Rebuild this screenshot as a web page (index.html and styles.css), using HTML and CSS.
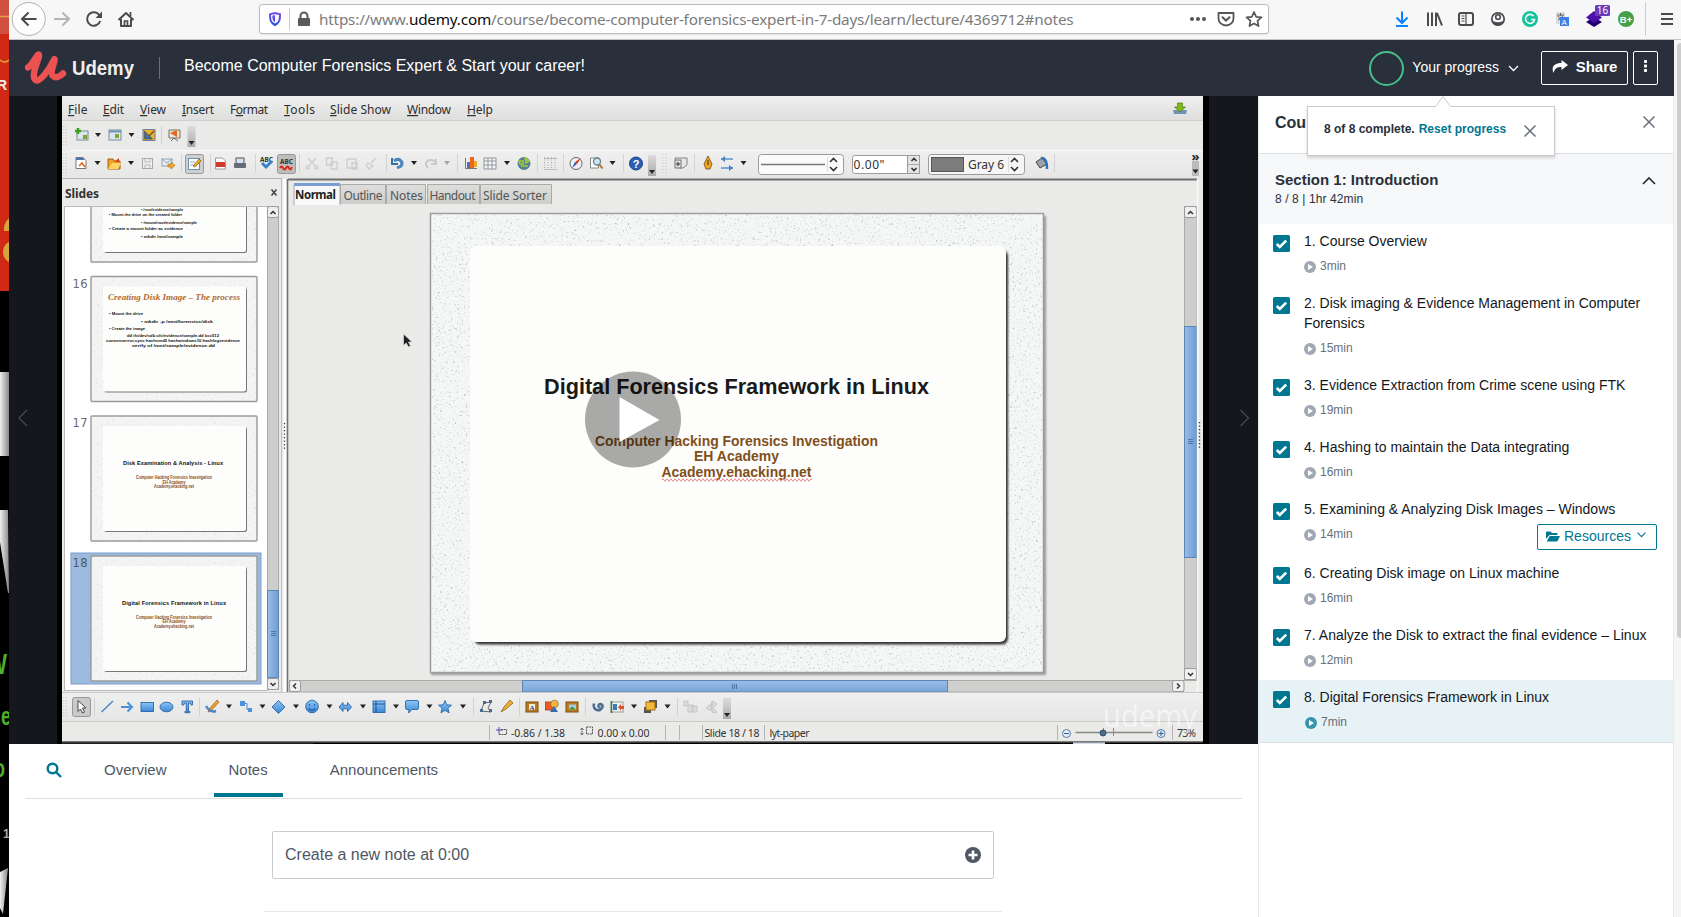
FILE: index.html
```
<!DOCTYPE html>
<html lang="en">
<head>
<meta charset="utf-8">
<title>Become Computer Forensics Expert &amp; Start your career! | Udemy</title>
<link rel="stylesheet" href="styles.css">
</head>
<body>
<svg class="defs" width="0" height="0">
  <defs>
    <symbol id="check" viewBox="0 0 17 17"><rect width="17" height="17" rx="1.5" fill="#007791"/><path d="M3.8 9l3 3L13.2 5.600" fill="none" stroke="#fff" stroke-width="2.600"/></symbol>
    <symbol id="play" viewBox="0 0 12 12"><circle cx="6" cy="6" r="6" fill="currentColor"/><path d="M4 3l5 3-5 3z" fill="#fff"/></symbol>
    <symbol id="close" viewBox="0 0 12 12"><path d="M.5.5l11 11M11.500.5l-11 11" fill="none" stroke="#686f7a" stroke-width="1.500"/></symbol>
  </defs>
</svg>
<div class="screen">
  <svg class="desktop" width="9" height="917" viewBox="0 0 9 917">
    <rect width="9" height="917" fill="#000"/>
    <rect width="9" height="291" fill="#d02a17"/>
    <rect width="9" height="34" fill="#d0503f"/>
    <path d="M0 16.500h9M0 60q4 4 9 0" stroke="#e0a040" stroke-width="1.500" fill="none"/>
    <text x="-3" y="90" class="strip-text" font-size="14" fill="#eee">R</text>
    <path d="M9 218q-6 6-5 13h5zM9 242c-8 4-8 16 0 20z" fill="#d9a23c"/>
    <linearGradient id="gs"><stop offset="0" stop-color="#eee"/><stop offset="1" stop-color="#888"/></linearGradient>
    <rect y="372" width="9" height="84" fill="url(#gs)"/>
    <path d="M0 510h8l1 83-1 0L0 542z" fill="url(#gs)"/>
    <text x="-13" y="674" class="strip-text" font-size="30" textLength="20" lengthAdjust="spacingAndGlyphs" fill="#4fae2a">W</text>
    <text x="1" y="725" class="strip-text" font-size="26" textLength="10" lengthAdjust="spacingAndGlyphs" fill="#4fae2a">e</text>
    <text x="-6" y="777" class="strip-text" font-size="26" textLength="11" lengthAdjust="spacingAndGlyphs" fill="#4fae2a">o</text>
    <text x="3" y="838" class="strip-text" font-size="12" fill="#aaa">1</text>
    <path d="M0 872l8-4-5 46-3-6z" fill="url(#gs)"/>
  </svg>
  <div class="window">
    <div class="toolbar">
      <svg class="nav-icons" width="140" height="39" viewBox="9 0 140 39" fill="none" stroke="#4a4a4f" stroke-width="2">
        <circle cx="28.700" cy="19" r="16.500" fill="#fdfdfd" stroke="#b1b1b3" stroke-width="1"/>
        <path d="M36.500 19H22M28.500 12.500L22 19l6.500 6.500"/>
        <path d="M54 19h15M62.500 12.500L69 19l-6.500 6.500" stroke="#b5b5b8"/>
        <path d="M99.500 15.500a6.700 6.700 0 1 0 .7 5.500"/><path d="M102 11.500v6.500h-6.500z" fill="#4a4a4f" stroke="none"/>
        <path d="M118.500 20l7.500-7 7.500 7M121 19v7h10v-7" stroke-linejoin="round"/><path d="M124.500 26v-5h3v5M130.500 12v4" stroke-width="1.700"/>
      </svg>
      <div class="urlbar">
        <svg width="60" height="28" viewBox="259 5 60 28">
          <linearGradient id="sh" x2="0" y2="1"><stop stop-color="#7a4de8"/><stop offset="1" stop-color="#2952d6"/></linearGradient>
          <path d="M274 13l5 1.300c0 5 0 8-5 10.700-5-2.700-5-5.700-5-10.700z" fill="none" stroke="url(#sh)" stroke-width="2"/>
          <path d="M274 15v7.500c-2.300-1.500-2.700-4-2.700-6.800z" fill="#5e50e0"/>
          <path d="M288.500 8v22" stroke="#ccc"/>
          <rect x="297" y="18" width="12" height="8" rx="1" fill="#5a5a5e"/><path d="M299.500 18v-2a3.500 3.500 0 0 1 7 0v2" fill="none" stroke="#5a5a5e" stroke-width="2"/>
        </svg>
        <span class="url"><span class="u1">https://www.</span><b>udemy.com</b><span class="u2">/course/become-computer-forensics-expert-in-7-days/learn/lecture/4369712#notes</span></span>
        <svg width="82" height="28" viewBox="1186 5 82 28" fill="none" stroke="#55555a">
          <g fill="#55555a" stroke="none"><circle cx="1192" cy="19" r="2"/><circle cx="1198" cy="19" r="2"/><circle cx="1204" cy="19" r="2"/></g>
          <path d="M1218.500 13h15v5.500a7.500 7 0 0 1-15 0z" stroke-width="1.800" stroke-linejoin="round"/><path d="M1222.500 17.300l3.500 3.300 3.500-3.300" stroke-width="2" stroke-linecap="round"/>
          <path d="M1254 12l2.200 4.800 5.200.6-3.900 3.500 1.100 5.200-4.600-2.700-4.600 2.700 1.100-5.200-3.900-3.500 5.200-.6z" stroke-width="1.700" stroke-linejoin="round"/>
        </svg>
      </div>
      <svg class="ext-icons" width="290" height="39" viewBox="1391 0 290 39" fill="none" stroke="#4a4a4f" stroke-width="2">
        <path d="M1402 11.500V22M1396.500 17.500l5.500 5.500 5.500-5.500M1396 26h12" stroke="#0a84ff"/>
        <path d="M1428 12.500V26M1432 12.500V26M1436 12.500V26M1437 13l5 12.500"/>
        <rect x="1459" y="13" width="14" height="12" rx="2"/><path d="M1466 13v12M1461.500 16h3M1461.500 18.500h3M1461.500 21h3" stroke-width="1.200"/>
        <circle cx="1498" cy="19" r="6.200" stroke-width="1.700"/><circle cx="1498" cy="17" r="2.300" stroke-width="1.600"/><path d="M1493 21q5 2.500 10 0l-1 3.500-4 1.500-4-1.500z" fill="#4a4a4f" stroke="none"/>
        <circle cx="1530" cy="19" r="8" fill="#15c39a" stroke="none"/><path d="M1533.500 16a4.500 4.500 0 1 0 1 3.500h-3.500" stroke="#fff" stroke-width="1.600"/>
        <rect x="1556" y="12" width="9" height="12" fill="#ddd" stroke="none"/><path d="M1557 15h7M1560.500 13v3M1558 20q4-1 5-5M1558 16q2 4 4 4" stroke="#666" stroke-width="1"/><rect x="1560" y="17" width="9" height="9" fill="#3b7de9" stroke="none"/><text x="1561.500" y="25" font-size="8" class="sans" fill="#fff" stroke="none">A</text>
        <path d="M1594 17l8 5-8 5-8-5z" fill="#22006e" stroke="none"/><path d="M1594 11l8 6.500-8 5.500-8-5.500z" fill="#4b10a8" stroke="none"/>
        <rect x="1595" y="5" width="15" height="11" rx="1.500" fill="#6a3ab8" stroke="none"/><text x="1602.500" y="14.300" font-size="10" text-anchor="middle" class="ui" fill="#fff" stroke="none">16</text>
        <circle cx="1626" cy="19" r="8" fill="#43a047" stroke="none"/><text x="1626" y="22.500" font-size="9.500" text-anchor="middle" class="sans bold" fill="#fff" stroke="none">B+</text>
        <path d="M1645.500 2.500v33" stroke="#ccc" stroke-width="1"/>
        <path d="M1661 14h12M1661 19h12M1661 24h12"/>
      </svg>
    </div>
    <div class="page">
      <header class="topbar">
        <svg class="logo" width="128" height="56" viewBox="25 40 128 56">
          <path d="M28 67.500C32 65 36 56 38.500 54.500C41.500 55 31 73 34.500 79C39 85.500 50 68 54.500 59C56 61 49.500 71 52.500 75.500C55.500 79 60 76.500 63 73.500" fill="none" stroke="#ec5252" stroke-width="6.400" stroke-linecap="round" stroke-linejoin="round"/>
          <text x="72" y="75" class="sans bold" font-size="19.500" textLength="62" lengthAdjust="spacingAndGlyphs" fill="#f0efec">Udemy</text>
        </svg>
        <div class="course-title">Become Computer Forensics Expert &amp; Start your career!</div>
        <div class="progress">
          <span class="ring"></span><span class="progress-label">Your progress</span>
          <svg width="11" height="7" viewBox="0 0 11 7"><path d="M1 1l4.500 4.500L10 1" fill="none" stroke="#fff" stroke-width="1.300"/></svg>
        </div>
        <button class="ghost share"><svg width="16" height="13" viewBox="0 0 16 13"><path d="M9.500 0L16 5 9.500 10V7C5 7 3 8 1.500 13 -1 7 2 3 9.500 3z" fill="#fff"/></svg>Share</button>
        <button class="ghost more"><svg width="3" height="12" viewBox="0 0 3 12" fill="#fff"><rect width="3" height="3" rx=".7"/><rect y="4.500" width="3" height="3" rx=".7"/><rect y="9" width="3" height="3" rx=".7"/></svg></button>
      </header>
      <div class="columns">
        <main class="main">
          <svg class="video" width="1249" height="648" viewBox="9 96 1249 648">
            <defs>
              <linearGradient id="menu" x2="0" y2="1"><stop stop-color="#efefef"/><stop offset="1" stop-color="#dfdfde"/></linearGradient>
              <linearGradient id="bar" x2="0" y2="1"><stop stop-color="#efefef"/><stop offset="1" stop-color="#e6e6e5"/></linearGradient>
              <linearGradient id="blueV"><stop stop-color="#9bbde6"/><stop offset="1" stop-color="#6c9cd2"/></linearGradient>
              <linearGradient id="blueH" x2="0" y2="1"><stop stop-color="#9bbde6"/><stop offset="1" stop-color="#78a5d8"/></linearGradient>
              <linearGradient id="over" x2="0" y2="1"><stop stop-color="#dcdcdc"/><stop offset="1" stop-color="#aaa"/></linearGradient>
              <linearGradient id="ib" x2="0" y2="1"><stop stop-color="#8cc4f5"/><stop offset="1" stop-color="#3a86d6"/></linearGradient>
              <filter id="noise" x="0" y="0" width="1" height="1"><feTurbulence type="fractalNoise" baseFrequency=".47" numOctaves="3" seed="7"/><feColorMatrix values="0 0 0 0 .5 0 0 0 0 .53 0 0 0 0 .54 3.600 0 0 0 -2.150"/><feComposite in2="SourceGraphic" operator="in"/></filter>
              <filter id="sh1" x="-5%" y="-5%" width="110%" height="112%"><feGaussianBlur stdDeviation="1.300"/></filter>
              <path id="c" d="M-3-2h6l-3 4z" fill="#222"/>
              <path id="d" d="M.5-9v18" stroke="#d2d2d2"/>
              <path id="g" d="M-1-10v20M2-10v20" stroke="#c4c4c4" stroke-dasharray="1 2"/>
              <g id="o"><rect x="-4" y="-10" width="8" height="21" fill="url(#over)"/><use href="#c" y="7"/></g>
              <g id="thumb"><rect width="166" height="125" rx="1" fill="#f3f4f3" stroke="#9a9a9a" stroke-width="1.400"/><rect x="1" y="1" width="164" height="123" filter="url(#noise)" opacity=".4"/><rect x="13.500" y="11.500" width="142.500" height="104.500" rx="2" fill="#777"/><rect x="12" y="10" width="143" height="105" rx="2" fill="#fdfdfb"/></g>
              <g id="sub" class="sans bold" font-size="4.600" fill="#8a4c17" text-anchor="middle"><text x="83" y="62.500" textLength="76" lengthAdjust="spacingAndGlyphs">Computer Hacking Forensics Investigation</text><text x="83" y="67" textLength="23" lengthAdjust="spacingAndGlyphs">EH Academy</text><text x="83" y="71.500" textLength="40" lengthAdjust="spacingAndGlyphs">Academy.ehacking.net</text></g>
            </defs>
            <rect x="9" y="96" width="1249" height="648" fill="#14171c"/>
            <rect x="57" y="96" width="1152" height="648" fill="#000"/>
            <rect x="62" y="96" width="1141" height="646" fill="#eaeae9"/>
            <rect x="62" y="741" width="1141" height="1.500" fill="#777"/>
            <path d="M313 743.200H62" stroke="#333"/><path d="M1073 743.200h32" stroke="#dfe5f5" stroke-width="1.500"/>
            <rect x="62" y="96" width="1141" height="24" fill="url(#menu)"/><path d="M62 120.500h1141" stroke="#cfcfcf"/>
            <g class="ui" font-size="12" fill="#2e2e2e">
              <text x="68" y="114" textLength="19.500"><tspan class="key">F</tspan>ile</text>
              <text x="103" y="114" textLength="21"><tspan class="key">E</tspan>dit</text>
              <text x="140" y="114" textLength="26"><tspan class="key">V</tspan>iew</text>
              <text x="182" y="114" textLength="32"><tspan class="key">I</tspan>nsert</text>
              <text x="230" y="114" textLength="38">F<tspan class="key">o</tspan>rmat</text>
              <text x="284" y="114" textLength="31"><tspan class="key">T</tspan>ools</text>
              <text x="330" y="114" textLength="61"><tspan class="key">S</tspan>lide Show</text>
              <text x="407" y="114" textLength="44"><tspan class="key">W</tspan>indow</text>
              <text x="467" y="114" textLength="26"><tspan class="key">H</tspan>elp</text>
            </g>
            <path d="M1173 110h14l-1 4h-12z" fill="#6d93b5"/><path d="M1177.500 103h5v4h3l-5.500 5-5.500-5h3z" fill="#83b81a" stroke="#4d7a10" stroke-width=".7"/>
            <rect x="62" y="151" width="1141" height="28" fill="url(#bar)"/><path d="M70 150.500h1133" stroke="#fafafa"/>
            <!-- presentation toolbar -->
            <use href="#g" x="64" y="136"/>
            <rect x="77" y="131" width="11" height="9" fill="#dbe6ee" stroke="#7f8c96"/><path d="M78 128v6M75 131h6" stroke="#38a11d" stroke-width="2.500"/><rect x="83" y="135" width="4" height="4" fill="#78a835"/>
            <use href="#c" x="98" y="135"/>
            <rect x="109" y="130" width="12" height="10" fill="#dbe6ee" stroke="#7f8c96"/><path d="M109 131.500h12" stroke="#6a94bd" stroke-width="2"/><rect x="115" y="134" width="4" height="4" fill="#78a835"/>
            <use href="#c" x="131.500" y="135"/>
            <rect x="143" y="129.500" width="12" height="11" fill="#edb12d" stroke="#6b7f96"/><path d="M144.500 131v8h8z" fill="#456fae" stroke="#345" stroke-width=".6"/><path d="M154 131l-5 5" stroke="#7a4a10" stroke-width="1.300"/>
            <use href="#d" x="161" y="135"/>
            <path d="M169 130h11v8h-11z" fill="#eae4da" stroke="#7e6c5a"/><path d="M170 133l7-3v7z" fill="#e0681f"/><path d="M171 141l3-3 4 3" fill="none" stroke="#666"/>
            <use href="#o" x="191.500" y="136"/>
            <!-- standard toolbar -->
            <use href="#g" x="64" y="164"/>
            <path d="M76 157.500h7l3 3v8H76z" fill="#fff" stroke="#777"/><path d="M76 158h8v2h-8z" fill="#4a76ad"/><path d="M79 166l3-3 3 4" stroke="#e0681f" stroke-width="1.600" fill="none"/>
            <use href="#c" x="97.500" y="163"/>
            <path d="M108 159h5l1 2h6v8h-12z" fill="#f0a328" stroke="#a3650d"/><path d="M112 163h9l-3 6h-10z" fill="#ffd465"/><path d="M114 162l5-4v4" fill="#d9481c"/>
            <use href="#c" x="131" y="163"/>
            <rect x="142.500" y="158.500" width="10" height="10" fill="#eee" stroke="#aaa"/><path d="M145 159v3h5v-3M145 168v-3h5v3" fill="none" stroke="#bbb"/>
            <rect x="162" y="159" width="10" height="7" fill="#e6eef4" stroke="#8ba1b4"/><path d="M162 159l5 4 5-4" fill="none" stroke="#8ba1b4"/><path d="M168 164h3v-2l4 3.500-4 3.500v-2h-3z" fill="#eea62c" stroke="#ae6d10" stroke-width=".6"/>
            <use href="#d" x="181" y="163"/>
            <rect x="185.500" y="154.500" width="18" height="19" rx="2" fill="#cfcfcf" stroke="#999"/><rect x="188.500" y="158.500" width="11" height="11" fill="#fff" stroke="#6c8fb0"/><path d="M190 162h5M190 165h4" stroke="#9ac"/><path d="M193 166l6-7 2 2-6 6z" fill="#e9ad20" stroke="#8a5910" stroke-width=".7"/>
            <use href="#d" x="210" y="163"/>
            <path d="M215.500 158h7l3 3v8h-10z" fill="#fff" stroke="#999"/><rect x="216" y="162" width="9" height="5" fill="#d23a2a"/>
            <rect x="236" y="158" width="8" height="6" fill="#cfe1f2" stroke="#555"/><rect x="234" y="163" width="12" height="5" rx="1" fill="#666c76"/>
            <use href="#d" x="255" y="163"/>
            <text x="260" y="162" class="ui bold" font-size="6.500" textLength="13" fill="#333">ABC</text><path d="M262 163l4 4 6-6" stroke="#3a7fcc" stroke-width="3" fill="none"/>
            <rect x="277.500" y="154.500" width="18" height="19" rx="2" fill="#bdbdbb" stroke="#999"/><text x="280" y="164" class="ui bold" font-size="6.500" textLength="13" fill="#333">ABC</text><path d="M280 168q1.500-3 3 0t3 0 3 0 3-1" stroke="#dc2716" stroke-width="2" fill="none"/>
            <use href="#d" x="299" y="163"/>
            <g stroke="#cdcdcd" fill="none" stroke-width="1.300"><path d="M308 158l8 9M316 158l-8 9"/><circle cx="307.500" cy="167.500" r="1.500"/><circle cx="316.500" cy="167.500" r="1.500"/><path d="M326.500 158h6v7h-6zM331 162h6v7h-6zM347 159h9v9h-9zM352 163h5v6h-5zM376 158l-5 5M368 163l5 3-4 3-3-4z"/></g>
            <use href="#d" x="386" y="163"/>
            <path d="M392 158v6h6" fill="none" stroke="#3c6fa3" stroke-width="2"/><path d="M394 161c5-4 10 1 7 5l-4 2" fill="none" stroke="#4c86c0" stroke-width="3"/>
            <use href="#c" x="414" y="163"/><path d="M436 159v5h-5M435 162c-4-4-10-1-9 3l2 3" fill="none" stroke="#c9c9c9" stroke-width="2"/><use href="#c" x="447" y="163" opacity=".35"/>
            <use href="#d" x="457" y="163"/>
            <path d="M465.500 158v10.500H477" fill="none" stroke="#777"/><path d="M467 162h3v6h-3z" fill="#3f77b9"/><path d="M470 157h4v11h-4z" fill="#f0651a"/><path d="M474 161h3v6h-3z" fill="#f2a72c"/>
            <path d="M484 158h12v11h-12zM484 161h12M484 165h12M488 158v11M492 158v11" fill="#f4f6f7" stroke="#8e989e"/>
            <use href="#c" x="507" y="163"/>
            <circle cx="524" cy="163.500" r="6.500" fill="#558192"/><path d="M519 161h4v3h-3zM525 158l4 3-3 2zM521 166h7" stroke="#a3c93c" stroke-width="1.600" fill="none"/>
            <use href="#d" x="537" y="163"/>
            <path d="M544.500 157v13M548 157v13M551.500 157v13M555 157v13" stroke="#aaa" stroke-dasharray="1 1.500"/><path d="M544 158.500h13M544 169.500h13" stroke="#bbb"/>
            <use href="#d" x="563" y="163"/>
            <circle cx="576" cy="163.500" r="6" fill="#eff1f5" stroke="#666"/><path d="M572 168l3-6 2 2z" fill="#2b63b3"/><path d="M581 158l-6 4 2 2z" fill="#d6331f"/>
            <path d="M590.500 158h8v10h-8z" fill="#fff" stroke="#888"/><circle cx="597" cy="161.500" r="3.500" fill="#cfe3f2" stroke="#66808f" stroke-width="1.300"/><path d="M599.500 164.500l3 4" stroke="#b1751a" stroke-width="2"/>
            <use href="#c" x="612.500" y="163"/><use href="#d" x="623" y="163"/>
            <circle cx="636" cy="163.500" r="6.500" fill="#2b5fb5" stroke="#173e80"/><text x="636" y="168" text-anchor="middle" class="sans bold" font-size="11" fill="#fff">?</text>
            <use href="#o" x="652" y="165"/><use href="#g" x="664" y="164"/>
            <path d="M675 158h12v7l-4 3h-4z" fill="#e6e8e8" stroke="#7c8587"/><rect x="675" y="160" width="6" height="8" fill="#ddd" stroke="#777"/><path d="M678 162v4M676 164h4" stroke="#333"/>
            <use href="#d" x="694" y="163"/>
            <path d="M708 156l4 8-2 5h-4l-2-5z" fill="#f0a51d" stroke="#6d4c18" stroke-width=".8"/><path d="M708 160v5" stroke="#333"/>
            <path d="M721 159h12M721 168h12" stroke="#5d93cd" stroke-width="1.500"/><path d="M725 156l-4 3 4 3zM729 165l4 3-4 3z" fill="#4681c4"/>
            <use href="#c" x="743.500" y="163"/>
            <rect x="758.500" y="154.500" width="85" height="20" rx="3" fill="#fbfbfb" stroke="#9b9b9b"/><path d="M761 164.500h64" stroke="#777" stroke-width="1.500"/>
            <rect x="852.500" y="155.500" width="67" height="18" rx="2" fill="#fff" stroke="#9b9b9b"/><rect x="907.500" y="155.500" width="12" height="18" fill="#e4e4e4" stroke="#9b9b9b"/>
            <rect x="928.500" y="154.500" width="96" height="20" rx="3" fill="#f6f6f6" stroke="#9b9b9b"/><rect x="931.500" y="157.500" width="32" height="14" fill="#7c7c7c" stroke="#555"/><path d="M827.500 157v15M1008.500 157v15" stroke="#ddd"/>
            <path d="M830 162l3.500-3.500 3.500 3.500M830 167l3.500 3.500 3.500-3.500M1011 162l3.500-3.500 3.500 3.500M1011 167l3.500 3.500 3.500-3.500M911.500 161l2.500-2.500 2.500 2.500M911.500 168l2.500 2.500 2.500-2.500" fill="none" stroke="#333" stroke-width="1.600"/><path d="M908 164.500h11" stroke="#aaa"/>
            <text x="853.500" y="169" class="ui" font-size="12" textLength="31" fill="#333">0.00"</text><text x="968" y="169" class="ui" font-size="12" textLength="36" fill="#333">Gray 6</text>
            <path d="M1036 162l6-4 5 6-7 4z" fill="#9ba2a8" stroke="#444"/><path d="M1041 158q6-1 6 11" fill="none" stroke="#2d6eb8" stroke-width="2.500"/><use href="#d" x="1054" y="163"/>
            <rect x="1192" y="161" width="7" height="15" fill="#bbb"/><use href="#c" x="1195.500" y="171.500"/><text x="1191.500" y="161" class="ui bold" font-size="13" fill="#222">»</text>
            <!-- slides pane -->
            <path d="M62 178.500h220" stroke="#b4b4b4"/><path d="M288 179.500h909" stroke="#6e6e6e" stroke-width="2"/>
            <text x="65" y="198" class="ui bold" font-size="12" textLength="34" fill="#333">Slides</text>
            <path d="M271.500 189.500l5 6M276.500 189.500l-5 6" stroke="#444" stroke-width="1.500"/>
            <rect x="64.500" y="206.500" width="203" height="484" fill="#fefefe" stroke="#bbb"/>
            <svg x="65" y="207" width="202" height="483" viewBox="65 207 202 483">
              <use href="#thumb" x="91" y="137"/>
              <g class="sans bold" font-size="4.200" fill="#111"><text x="141" y="210.500" textLength="42" lengthAdjust="spacingAndGlyphs">• /root/evidence/sample</text><text x="109" y="216" textLength="73" lengthAdjust="spacingAndGlyphs">• Mount the drive on the created folder</text><text x="141" y="224" textLength="56" lengthAdjust="spacingAndGlyphs">• /mount/root/evidence/sample</text><text x="109" y="230" textLength="74" lengthAdjust="spacingAndGlyphs">• Create a mount folder as evidence</text><text x="141" y="238" textLength="42" lengthAdjust="spacingAndGlyphs">• mkdir /mnt/sample</text></g>
              <use href="#thumb" x="91" y="276.500"/>
              <text x="108" y="300" class="serif" font-size="8.400" textLength="132" lengthAdjust="spacingAndGlyphs" fill="#b06a35">Creating Disk Image – The process</text>
              <g class="sans bold" font-size="4.200" fill="#111"><text x="109" y="314.500" textLength="34" lengthAdjust="spacingAndGlyphs">• Mount the drive</text><text x="141" y="322.500" textLength="72" lengthAdjust="spacingAndGlyphs">• mkdir -p /mnt/forensics/disk</text><text x="109" y="329.500" textLength="36" lengthAdjust="spacingAndGlyphs">• Create the image</text><text x="127" y="337" font-size="3.800" textLength="92" lengthAdjust="spacingAndGlyphs">dd if=/dev/sdb of=/evidence/sample.dd bs=512</text><text x="106" y="341.500" font-size="3.800" textLength="134" lengthAdjust="spacingAndGlyphs">conv=noerror,sync hash=md5 hashwindow=10 hashlog=evidence</text><text x="132" y="346.500" font-size="3.800" textLength="83" lengthAdjust="spacingAndGlyphs">verify of /mnt/sample/evidence.dd</text></g>
              <use href="#thumb" x="91" y="416"/><use href="#sub" x="91" y="416.500"/>
              <text x="123" y="465" class="sans bold" font-size="5.600" textLength="100" fill="#111">Disk Examination &amp; Analysis - Linux</text>
              <rect x="71" y="553" width="190" height="131" fill="#9cb9de" stroke="#7d9fca"/>
              <use href="#thumb" x="91" y="556"/><use href="#sub" x="91" y="556"/>
              <text x="122" y="605" class="sans bold" font-size="5.600" textLength="104" fill="#111">Digital Forensics Framework in Linux</text>
              <g class="wide" font-size="11.500" fill="#6a6a6a"><text x="72.500" y="287.500" textLength="15">16</text><text x="72.500" y="427" textLength="15">17</text><text x="72.500" y="567" textLength="15" fill="#4d5968">18</text></g>
            </svg>
            <rect x="267.500" y="206.500" width="11" height="483" fill="#cdcdcc" stroke="#aaa"/><rect x="267.500" y="206.500" width="11" height="11" rx="2" fill="#eee" stroke="#999"/><rect x="267.500" y="678.500" width="11" height="11" rx="2" fill="#eee" stroke="#999"/>
            <rect x="267.500" y="590.500" width="11" height="87" fill="url(#blueV)" stroke="#5d87b7"/><path d="M271 631.500h5M271 633.500h5M271 635.500h5" stroke="#4d77a7"/>
            <path d="M270.500 214l2.500-2.500 2.500 2.500M270.500 683l2.500 2.500 2.500-2.500" stroke="#333" stroke-width="1.500" fill="none"/>
            <path d="M281.500 179v513" stroke="#c0c0c0"/><path d="M285 179v513" stroke="#fff" stroke-width="3"/><path d="M287.500 179v513" stroke="#727272" stroke-width="1.600"/><path d="M284.500 423v26" stroke="#333" stroke-width="1.300" stroke-dasharray="1.300 2.200"/>
            <!-- editing area -->
            <linearGradient id="tab" x2="0" y2="1"><stop stop-color="#dededd"/><stop offset="1" stop-color="#cdcdcc"/></linearGradient>
            <path d="M340.500 204v-19.500h45V204M386.500 204v-19.500h39V204M427.500 204v-19.500h52V204M480.500 204v-19.500h71V204" fill="url(#tab)" stroke="#aaa"/>
            <rect x="294" y="183" width="46" height="22" rx="2" fill="#f8f8f8"/><path d="M294 205v-20M340 185v20" stroke="#aaa"/><path d="M294 184.500h46" stroke="#7b9fd3" stroke-width="3"/>
            <g class="ui" font-size="12" fill="#555"><text x="295" y="199" class="bold" font-size="11.500" textLength="41" fill="#222">Normal</text><text x="343.500" y="199.500" textLength="39">Outline</text><text x="390" y="199.500" textLength="33">Notes</text><text x="429.500" y="199.500" textLength="46">Handout</text><text x="483" y="199.500" textLength="64">Slide Sorter</text></g>
            <rect x="431" y="216" width="615" height="459" fill="#999" filter="url(#sh1)"/>
            <rect x="430.500" y="213.500" width="613" height="459" fill="#f5f7f6" stroke="#9a9e9e" stroke-width="1.500"/><rect x="431" y="214" width="612" height="458" filter="url(#noise)"/>
            <rect x="474" y="250" width="534" height="394.500" rx="6" fill="#333" filter="url(#sh1)"/>
            <rect x="470" y="246" width="536" height="396" rx="6" fill="#fdfdfb"/>
            <text x="544" y="394" class="sans bold" font-size="22.500" textLength="385" lengthAdjust="spacingAndGlyphs" fill="#1a1a1a">Digital Forensics Framework in Linux</text>
            <g class="sans bold" font-size="14" fill="#804f1b"><text x="595" y="446" textLength="283" lengthAdjust="spacingAndGlyphs">Computer Hacking Forensics Investigation</text><text x="694" y="461" textLength="85" lengthAdjust="spacingAndGlyphs">EH Academy</text><text x="661.500" y="476.500" textLength="150" lengthAdjust="spacingAndGlyphs">Academy.ehacking.net</text></g>
            <path d="M662 480q1-2.500 2 0t2 0 2 0 2 0 2 0 2 0 2 0 2 0 2 0 2 0 2 0 2 0 2 0 2 0 2 0 2 0 2 0 2 0 2 0 2 0 2 0 2 0 2 0 2 0 2 0 2 0 2 0 2 0 2 0 2 0 2 0 2 0 2 0 2 0 2 0 2 0 2 0 2 0 2 0 2 0 2 0 2 0 2 0 2 0 2 0 2 0 2 0 2 0 2 0 2 0 2 0 2 0 2 0 2 0 2 0 2 0 2 0 2 0 2 0 2 0 2 0 2 0 2 0 2 0 2 0 2 0 2 0 2 0 2 0 2 0 2 0 2 0 2 0 2 0 2 0" fill="none" stroke="#e88" stroke-width="1"/>
            <path d="M403.500 334v11.500l2.700-2.500 2.300 4 2-1-2-4h3.500z" fill="#222" stroke="#ddd" stroke-width=".7"/>
            <rect x="1184.500" y="206.500" width="12" height="474" fill="#cdcdcc" stroke="#aaa"/><rect x="1184.500" y="206.500" width="12" height="11" rx="2" fill="#f0f0f0" stroke="#999"/><rect x="1184.500" y="668.500" width="12" height="11" rx="2" fill="#f0f0f0" stroke="#999"/><rect x="1184.500" y="326.500" width="12" height="231" fill="url(#blueV)" stroke="#5d87b7"/><path d="M1188 439.500h5M1188 441.500h5M1188 443.500h5" stroke="#4d77a7"/>
            <path d="M1188 214l2.500-2.500 2.500 2.500M1188 673l2.500 2.500 2.500-2.500" stroke="#333" stroke-width="1.500" fill="none"/>
            <path d="M1197.500 179v513" stroke="#fafafa" stroke-width="1.500"/><path d="M1199.500 422v27" stroke="#333" stroke-width="1.300" stroke-dasharray="1.300 2.200"/>
            <rect x="289.500" y="680.500" width="894" height="11.500" fill="#cfd0cd" stroke="#aaa"/><rect x="289.500" y="680.500" width="11" height="11" rx="2" fill="#f0f0f0" stroke="#999"/><rect x="1172.500" y="680.500" width="11.500" height="11" rx="2" fill="#f0f0f0" stroke="#999"/><rect x="522.500" y="680.500" width="425" height="11.500" fill="url(#blueH)" stroke="#5d87b7"/><path d="M732.500 684v5M734.500 684v5M736.500 684v5" stroke="#4d77a7"/>
            <path d="M296 683.500l-2.500 2.500 2.500 2.500M1177 683.500l2.500 2.500-2.500 2.500" stroke="#333" stroke-width="1.500" fill="none"/>
            <!-- drawing toolbar -->
            <rect x="62" y="693" width="1141" height="28" fill="url(#bar)"/><path d="M62 692.500h1141M62 721.500h1141" stroke="#c9c9c8"/><use href="#g" x="64" y="707"/>
            <rect x="72.500" y="697.500" width="18" height="19" rx="2" fill="#c9c9c8" stroke="#999"/><path d="M78 700.500v11l2.500-2.500 2 4 2-1-2-4h3.500z" fill="#fff" stroke="#444"/>
            <use href="#d" x="94" y="707"/>
            <path d="M101.500 712l11.500-11" stroke="#4a86c5" stroke-width="1.500"/><path d="M121 707h9" stroke="#4a8fd8" stroke-width="2"/><path d="M127.500 702.500l4.500 4.500-4.500 4.500" fill="none" stroke="#4a8fd8" stroke-width="2"/>
            <g fill="url(#ib)" stroke="#2b66a8" stroke-width=".9"><rect x="141" y="702.500" width="12.500" height="9"/><ellipse cx="166.500" cy="707" rx="6.500" ry="4.800"/><path d="M182 701h10.500v4h-1.500l-.5-2h-2v8.500h1.400v1.200h-5v-1.200h1.400V703h-2l-.5 2h-1.800z"/><path d="M278.500 700.500l6.500 6.500-6.500 6.500-6.500-6.500zM339 707l4-4.500v2.700h4.500v-2.700l4 4.500-4 4.500v-2.700H343v2.700zM405.500 702q0-1.500 1.500-1.500h10q1.500 0 1.500 1.500v6q0 1.500-1.500 1.500h-5l-3.500 3.500.5-3.500h-2q-1.500 0-1.500-1.500zM445 700.500l1.800 4.300 4.700.4-3.600 3 1.200 4.600-4.100-2.500-4.100 2.500 1.200-4.600-3.600-3 4.700-.4z"/><circle cx="312" cy="706.500" r="6.300"/><rect x="373" y="701" width="12" height="11.500"/></g>
            <path d="M309.500 704v1.500M314.500 704v1.500M308.500 708.500q3.500 3.500 7 0M376 701v11M373 704h12" stroke="#215793" stroke-width="1.100" fill="none"/>
            <path d="M217 700l-8 9-1 3 3-1 8-9z" fill="#eba02b" stroke="#8b541b" stroke-width=".6"/><path d="M206 706q4 7 10 5" stroke="#4687cc" stroke-width="2.500" fill="none"/>
            <path d="M242 703.500h5v6h4" stroke="#4687cc" fill="none"/><path d="M240 701h5v5h-5zM248 708h4v4h-4z" fill="#4b92db"/>
            <use href="#d" x="199" y="707"/><use href="#c" x="229" y="706.500"/><use href="#c" x="262.500" y="706.500"/><use href="#c" x="296" y="706.500"/><use href="#c" x="329.500" y="706.500"/><use href="#c" x="363" y="706.500"/><use href="#c" x="396" y="706.500"/><use href="#c" x="429.500" y="706.500"/><use href="#c" x="463" y="706.500"/><use href="#d" x="473" y="707"/>
            <path d="M481 711l3-8 7-1-3 6 3 4z" fill="none" stroke="#666"/><path d="M480 709h3v3h-3zM483 701h3v3h-3zM489 700h3v3h-3zM489 709h3v3h-3z" fill="#456990"/>
            <path d="M501 712l3-5 6-7 3 3-7 6z" fill="#edaf38" stroke="#8f611c" stroke-width=".8"/><use href="#d" x="519" y="707"/>
            <rect x="526" y="702" width="12" height="10" fill="#b97925" stroke="#80500d"/><rect x="529" y="704" width="6" height="6" fill="#f6ead1"/><text x="532" y="710" text-anchor="middle" class="serif-b" font-size="7" fill="#224c82">A</text>
            <rect x="545.500" y="702" width="8" height="8" fill="#ee5a23" stroke="#8e3312" stroke-width=".7"/><circle cx="554.500" cy="704" r="3.800" fill="#f2b842" stroke="#93701a" stroke-width=".7"/><path d="M554 706l4 6h-8z" fill="#3a6cab"/>
            <rect x="566" y="702" width="12" height="10" fill="#b97925" stroke="#80500d"/><rect x="569" y="704.500" width="7" height="5" fill="#9dd0e8"/><path d="M569 709.500l3-3 4 3z" fill="#4d8c25"/><use href="#d" x="585" y="707"/>
            <path d="M594 703.500c-2 7 7 9 8.500 3.500c.5-3-3-4-4-1.500c-.5 1.500 1 2 1.500 1" fill="none" stroke="#4c6f90" stroke-width="2.600"/>
            <rect x="611" y="702" width="12" height="10" fill="#f2f2f0" stroke="#999"/><path d="M611.500 701v12" stroke="#288a35" stroke-width="1.500"/><path d="M613 704h4v6h-4z" fill="#3f79bd"/><path d="M618 707l3-3v2h3v3h-3v2z" fill="#dd542b"/>
            <use href="#c" x="634" y="706.500"/><path d="M649 700h8v8h-8zM644 707h7v6h-7z" fill="#555"/><rect x="646" y="702" width="9" height="8" fill="#f4b93c" stroke="#a7710f"/><use href="#c" x="667.500" y="706.500"/><use href="#d" x="677" y="707"/>
            <g fill="#ddd" stroke="#c4c4c4"><path d="M684 701h4v5h-4zM688 705h5v7h-5zM692 706h5v6h-5zM706 708l6-5-1 8zM712 701l5 3-5 4zM711 706l2 7 4-1z"/></g><use href="#o" x="727" y="708"/>
            <!-- status bar -->
            <path d="M489.500 725v15M665.500 725v15M679.500 725v15M702.500 725v15M764.500 725v15M1057.500 725v15M1172.500 725v15" stroke="#b4b4b4"/>
            <path d="M496 730h7M499 727v7" stroke="#5146b0"/><path d="M501 729.500h5.500v5H499M586.500 727h6v7h-6zM582 728v7M580.500 730l1.500-2 1.500 2M580.500 733l1.500 2 1.500-2" fill="none" stroke="#555" stroke-dasharray="2 .7"/>
            <g class="ui" font-size="10.500" fill="#333"><text x="511" y="737" textLength="54">-0.86 / 1.38</text><text x="597.500" y="737" textLength="52">0.00 x 0.00</text><text x="704.500" y="737" textLength="55">Slide 18 / 18</text><text x="769.500" y="737" textLength="40">lyt-paper</text><text x="1177" y="737" textLength="19">73%</text></g>
            <path d="M1075.500 732.500h77" stroke="#888" stroke-width="1.500"/><path d="M1113.500 728v8M1103.500 728v8" stroke="#888"/><circle cx="1103" cy="733" r="3" fill="#4a6f8f" stroke="#2e4b63"/>
            <g fill="#e3edf7" stroke="#587ba3"><circle cx="1066.500" cy="733.500" r="4"/><circle cx="1161" cy="733.500" r="4"/></g><path d="M1064 733.500h5M1158.500 733.500h5M1161 731v5" stroke="#2f5d94"/>
            <text x="1103" y="727" class="mark" font-size="31" textLength="94" lengthAdjust="spacingAndGlyphs" fill="#fff" opacity=".55">udemy</text>
            <circle cx="633" cy="419.500" r="48" fill="#000" opacity=".33"/><path d="M619.500 397v45l40-22z" fill="#fff"/>
            <path d="M27 410l-8 8 8 8M1240.500 410l8 8-8 8" fill="none" stroke="#44484e" stroke-width="1.300"/>
          </svg>
          <nav class="tabs">
            <svg class="search" width="16" height="16" viewBox="0 0 16 16" fill="none" stroke="#007791" stroke-width="2.400"><circle cx="6.500" cy="6.500" r="4.800"/><path d="M10 10l5 5"/></svg>
            <a class="tab">Overview</a><a class="tab active">Notes</a><a class="tab">Announcements</a>
          </nav>
          <div class="note">Create a new note at 0:00<svg width="16" height="16" viewBox="0 0 16 16"><circle cx="8" cy="8" r="8" fill="#505763"/><path d="M8 3.500v9M3.500 8h9" stroke="#fff" stroke-width="2.600"/></svg></div>
          <div class="rule"></div>
        </main>
        <aside class="side">
          <div class="side-head"><span class="side-title">Cou</span><svg class="x" width="12" height="12"><use href="#close"/></svg></div>
          <div class="section"><div><div class="section-title">Section 1: Introduction</div><div class="section-meta">8 / 8 | 1hr 42min</div></div>
            <svg width="14" height="9" viewBox="0 0 14 9"><path d="M1 8l6-6 6 6" fill="none" stroke="#29303b" stroke-width="1.700"/></svg></div>
          <div class="lecture"><svg class="cb"><use href="#check"/></svg><div class="info"><div class="name">1. Course Overview</div><div class="time"><svg><use href="#play"/></svg>3min</div></div></div>
          <div class="lecture"><svg class="cb"><use href="#check"/></svg><div class="info"><div class="name">2. Disk imaging &amp; Evidence Management in Computer Forensics</div><div class="time"><svg><use href="#play"/></svg>15min</div></div></div>
          <div class="lecture"><svg class="cb"><use href="#check"/></svg><div class="info"><div class="name">3. Evidence Extraction from Crime scene using FTK</div><div class="time"><svg><use href="#play"/></svg>19min</div></div></div>
          <div class="lecture"><svg class="cb"><use href="#check"/></svg><div class="info"><div class="name">4. Hashing to maintain the Data integrating</div><div class="time"><svg><use href="#play"/></svg>16min</div></div></div>
          <div class="lecture with-res"><svg class="cb"><use href="#check"/></svg><div class="info"><div class="name">5. Examining &amp; Analyzing Disk Images – Windows</div><div class="time"><svg><use href="#play"/></svg>14min
            <button class="res"><svg class="folder" viewBox="0 0 14 11"><path d="M0 8V1.500Q0 .5 1 .5h3.500l1.500 1.500h4.500q1 0 1 1v1H4.500Q3 4 2.300 5.200zM.8 10.500L3.300 5.600Q3.700 5 4.500 5H14l-2.300 4.700q-.4.800-1.300.800z" fill="#007791"/></svg>Resources<svg class="arrow" viewBox="0 0 9 6"><path d="M.5.7l4 4 4-4" fill="none" stroke="#007791" stroke-width="1.100"/></svg></button></div></div></div>
          <div class="lecture"><svg class="cb"><use href="#check"/></svg><div class="info"><div class="name">6. Creating Disk image on Linux machine</div><div class="time"><svg><use href="#play"/></svg>16min</div></div></div>
          <div class="lecture"><svg class="cb"><use href="#check"/></svg><div class="info"><div class="name">7. Analyze the Disk to extract the final evidence – Linux</div><div class="time"><svg><use href="#play"/></svg>12min</div></div></div>
          <div class="lecture current"><svg class="cb"><use href="#check"/></svg><div class="info"><div class="name">8. Digital Forensics Framework in Linux</div><div class="time"><svg><use href="#play"/></svg>7min</div></div></div>
        </aside>
      </div>
      <div class="popover">
        <svg class="tip" width="16" height="11" viewBox="0 0 16 11"><path d="M0 11L8 0l8 11z" fill="#fff"/><path d="M.5 10.500L8 .5l7.500 10" fill="none" stroke="#cacbcc"/></svg>
        <span>8 of 8 complete.</span><a>Reset progress</a><svg class="x" width="12" height="12"><use href="#close"/></svg>
      </div>
    </div>
    <div class="scroll"><div class="thumb"></div></div>
  </div>
</div>
</body>
</html>
```
FILE: styles.css
```
* { box-sizing: border-box; }
body { margin: 0; width: 1681px; height: 917px; overflow: hidden; background: #fff; font-family: "Liberation Sans", Arial, sans-serif; color: #29303b; }
svg { display: block; flex: none; }
.defs { position: absolute; }
.sans, .strip-text { font-family: "Liberation Sans", sans-serif; }
.strip-text, .bold { font-weight: bold; }
.ui { font-family: "Noto Sans", "Open Sans", sans-serif; }
.wide { font-family: "DejaVu Sans", sans-serif; }
.serif { font-family: "Liberation Serif", serif; font-style: italic; font-weight: bold; }
.serif-b { font-family: "Liberation Serif", serif; font-weight: bold; }
.mark { font-family: "Open Sans", sans-serif; }
.key { text-decoration: underline; }

.screen { display: flex; height: 917px; }
.window { flex: 1; display: grid; grid-template: 40px 877px / 1665px 7px; }

.toolbar { grid-column: 1 / 3; display: flex; background: #f7f7f8; border-bottom: 1px solid #c4c4c8; height: 40px; }
.urlbar { margin: 4px 0 0 110px; width: 1010px; height: 30px; display: flex; align-items: center; background: #fff; border: 1px solid #bcbcc0; border-radius: 3px; box-shadow: 0 1px 2px rgba(0,0,0,.08); }
.url { flex: 1; white-space: nowrap; font: 15.300px/28px "Noto Sans", sans-serif; letter-spacing: -.2px; margin-left: -1px; color: #7b7b7d; }
.url b { font-weight: normal; color: #0c0c0d; }
.ext-icons { margin-left: auto; }

.page { position: relative; }
.topbar { height: 56px; display: flex; align-items: center; padding: 0 16px; background: #29303b; color: #fff; }
.logo { margin-right: 6px; }
.course-title { flex: 1; font-size: 16px; height: 22px; line-height: 17px; padding-left: 24px; border-left: 1px solid #686f7a; }
.progress { display: flex; align-items: center; margin-right: 22px; font-size: 14px; }
.ring { width: 35px; height: 35px; border: 2px solid #46bd8a; border-radius: 50%; margin-right: 8px; }
.progress-label { margin-right: 9px; margin-top: -2px; }
.ghost { height: 34px; border: 1px solid #fff; border-radius: 2px; background: none; color: #fff; font: bold 15px "Liberation Sans", sans-serif; display: flex; align-items: center; justify-content: center; padding: 0 0 4px; }
.share { width: 87px; margin-right: 5px; gap: 8px; }
.more { width: 25px; padding-bottom: 5px; }

.columns { display: flex; }
.main { width: 1249px; }
.tabs { margin: 0 16px; height: 55px; border-bottom: 1px solid #dedfe0; display: flex; align-items: flex-start; padding-left: 21px; }
.search { margin: 18px 26px 0 0; }
.tab { height: 53px; padding: 0 15px; margin-right: 32px; font-size: 15px; line-height: 52px; color: #505763; }
.tab:first-of-type { padding-left: 16px; }
.active { border-bottom: 4px solid #007791; }
.note { margin: 32px 0 0 263px; width: 722px; height: 48px; border: 1px solid #cacbcc; border-radius: 2px; display: flex; align-items: center; justify-content: space-between; padding: 0 12px 1px; font-size: 16px; color: #505763; }
.rule { margin: 32px 0 0 255px; width: 738px; height: 1px; background: #e8e9eb; }

.side { width: 416px; height: 821px; border: solid #e8e9eb; border-width: 0 1px; }
.side-head { height: 58px; border-bottom: 1px solid #dedfe0; display: flex; justify-content: space-between; align-items: flex-start; padding: 15px 18px 0 16px; font-size: 16px; line-height: 24px; font-weight: bold; }
.side-head .x { margin-top: 5px; }
.section { height: 70px; background: #f7f8fa; display: flex; justify-content: space-between; padding: 16px 17px 0 16px; }
.section-title { font-size: 15px; font-weight: bold; line-height: 20px; }
.section-meta { font-size: 12px; line-height: 18px; letter-spacing: .1px; }
.section svg { margin-top: 6px; }
.lecture { display: flex; padding: 7px 16px 11px 14px; min-height: 62px; }
.with-res { height: 64px; }
.current { background: #e6f2f5; border-bottom: 1px solid #dedfe0; }
.cb { width: 17px; height: 17px; margin: 4px 14px 0 0; }
.info { flex: 1; }
.name { font-size: 14px; line-height: 20px; color: #14171c; }
.time { display: flex; align-items: center; height: 18px; margin-top: 6px; font-size: 12px; color: #686f7a; }
.time > svg { width: 12px; height: 12px; margin-right: 4px; margin-top: 1px; color: #a1a7b3; }
.current .time > svg { color: #3795ab; margin-left: 1px; }
.res { flex: none; margin: 6px 0 0 auto; width: 120px; height: 26px; border: 1px solid #007791; border-radius: 2px; background: #fff; color: #007791; font: 14px "Liberation Sans", sans-serif; display: flex; align-items: center; padding: 0 0 2px 8px; }
.folder { width: 14px; height: 11px; margin-right: 4px; }
.arrow { width: 9px; height: 6px; margin-left: 6px; margin-top: -2px; }

.popover { position: absolute; left: 1298px; top: 66px; width: 248px; height: 50px; background: #fff; border: 1px solid #cacbcc; box-shadow: 0 2px 3px rgba(20,23,28,.18); display: flex; padding: 14px 18px 0 16px; font-size: 12px; font-weight: bold; line-height: 16px; }
.popover a { color: #007791; margin-left: 4px; }
.popover .x { margin: 4px 0 0 auto; }
.tip { position: absolute; left: 127px; top: -11px; }

.scroll { background: #f5f5f5; padding: 3px 0 0 3px; }
.thumb { height: 595px; background: #cdcdcd; border-radius: 4px 0 0 4px; }
```
